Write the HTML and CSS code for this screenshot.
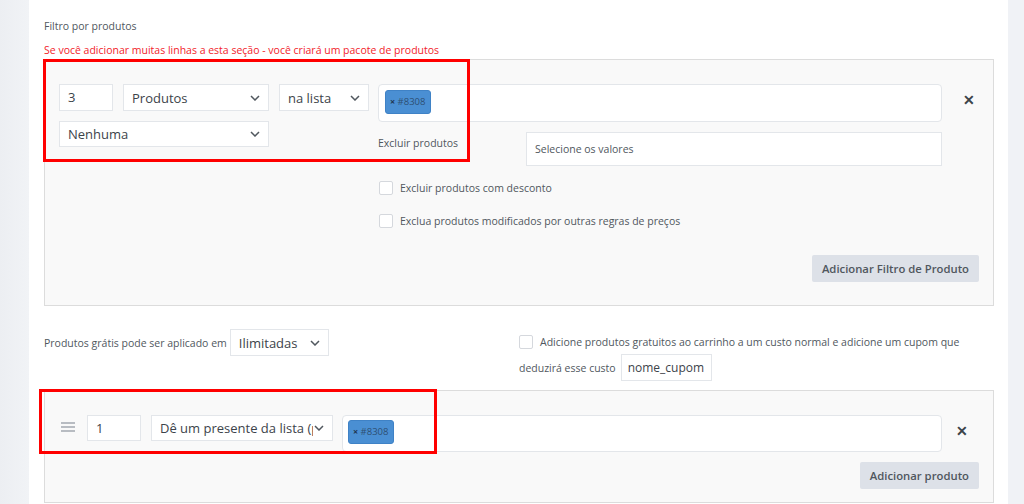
FILE: index.html
```html
<!DOCTYPE html>
<html lang="pt">
<head>
  <meta charset="UTF-8">
  <title>Regra de preço - produtos grátis</title>
  <link rel="stylesheet" href="styles.css">
</head>
<body>
  <div class="page">
    <div class="side side-left"></div>

    <div class="main">
      <div class="caption">Filtro por produtos</div>
      <div class="warning">Se você adicionar muitas linhas a esta seção - você criará um pacote de produtos</div>

      <div class="box box-filter">
        <div class="rule">
          <div class="rule-left">
            <div class="line">
              <div class="field qty">3</div>
              <div class="select sel-type"><span>Produtos</span><svg viewBox="0 0 10 6"><path d="M1 1l4 4 4-4"/></svg></div>
              <div class="select sel-method"><span>na lista</span><svg viewBox="0 0 10 6"><path d="M1 1l4 4 4-4"/></svg></div>
            </div>
            <div class="line">
              <div class="select sel-none"><span>Nenhuma</span><svg viewBox="0 0 10 6"><path d="M1 1l4 4 4-4"/></svg></div>
            </div>
          </div>

          <div class="rule-right">
            <div class="tagbox"><span class="chip"><b>×</b> #8308</span></div>
            <div class="exclude">
              <div class="exclude-label">Excluir produtos</div>
              <div class="field values">Selecione os valores</div>
            </div>
            <label class="check"><span class="box-check"></span>Excluir produtos com desconto</label>
            <label class="check"><span class="box-check"></span>Exclua produtos modificados por outras regras de preços</label>
          </div>

          <div class="remove">&#x2715;</div>
        </div>
        <div class="footer">
          <button class="btn">Adicionar Filtro de Produto</button>
        </div>
      </div>

      <div class="options">
        <div class="applied">
          Produtos grátis pode ser aplicado em
          <div class="select sel-limit"><span>Ilimitadas</span><svg viewBox="0 0 10 6"><path d="M1 1l4 4 4-4"/></svg></div>
        </div>
        <div class="coupon">
          <div class="coupon-line"><span class="box-check"></span>Adicione produtos gratuitos ao carrinho a um custo normal e adicione um cupom que</div>
          <div class="coupon-line">deduzirá esse custo <div class="field coupon-name">nome_cupom</div></div>
        </div>
      </div>

      <div class="box box-gift">
        <div class="gift-row">
          <div class="handle"><i></i><i></i><i></i></div>
          <div class="field qty">1</div>
          <div class="select sel-gift"><span>Dê um presente da lista (produto)</span><svg viewBox="0 0 10 6"><path d="M1 1l4 4 4-4"/></svg></div>
          <div class="tagbox tagbox-gift"><span class="chip"><b>×</b> #8308</span></div>
          <div class="remove">&#x2715;</div>
        </div>
        <div class="footer">
          <button class="btn">Adicionar produto</button>
        </div>
      </div>
    </div>

    <div class="side side-right"></div>

    <div class="mark mark-filter"></div>
    <div class="mark mark-gift"></div>
  </div>
</body>
</html>
```

FILE: styles.css
```css
html, body { margin: 0; padding: 0; }
body {
  font-family: "Open Sans", "Noto Sans", sans-serif;
  font-size: 10.5px;
  color: #50575e;
  background: #fff;
}
.page { position: relative; display: flex; width: 1024px; height: 504px; overflow: hidden; }
.side { flex: none; }
.side-left { width: 29px; background: linear-gradient(to right, #eceef2, #f1f3f6); }
.side-right { width: 16px; background: #f0f2f6; }

.main { flex: 1; padding: 0 14px 0 15px; background: #fff; }

.caption { margin-top: 18px; height: 16px; line-height: 16px; }
.warning { margin-top: 8px; height: 16px; line-height: 16px; color: #f2232a; }

.box {
  background: #f9f9f9;
  border: 1px solid #dcdcdc;
}
.box-filter { margin-top: 1px; padding: 24px 14px 21px 14px; height: 200px; }

.rule { display: flex; }
.rule-left { width: 310px; }
.line { display: flex; gap: 10px; margin-bottom: 10px; }

.field {
  box-sizing: border-box;
  height: 27px;
  line-height: 25px;
  padding: 0 8px;
  background: #fff;
  border: 1px solid #e3e6ea;
  font-size: 13px;
  color: #3c434a;
}
.qty { width: 54px; }

.select {
  box-sizing: border-box;
  display: flex;
  align-items: center;
  height: 27px;
  padding: 0 8px;
  background: #fff;
  border: 1px solid #e3e6ea;
  font-size: 13px;
  color: #3c434a;
}
.select span { flex: 1; white-space: nowrap; overflow: hidden; }
.select svg { flex: none; width: 10px; height: 6px; margin-left: 6px; fill: none; stroke: #50575e; stroke-width: 1.5; }
.sel-type { width: 146px; }
.sel-method { width: 90px; }
.sel-none { width: 210px; height: 26px; }
.sel-limit { width: 99px; margin-left: 3px; }
.sel-gift { width: 182px; }
.sel-gift svg { margin-left: 1px; }

.rule-right { width: 564px; margin-left: 9px; }
.tagbox {
  box-sizing: border-box;
  height: 38px;
  padding: 5px 6px;
  background: #fff;
  border: 1px solid #e3e6ea;
  border-radius: 4px;
}
.chip {
  display: inline-block;
  box-sizing: border-box;
  height: 24px;
  line-height: 22px;
  padding: 0 4px;
  background: #4a8fd3;
  border: 1px solid #3f82c6;
  border-radius: 3px;
  font-size: 9.5px;
  color: #2e4f73;
}
.chip b { font-size: 9px; color: #1f3550; }

.exclude { display: flex; margin-top: 10px; }
.exclude-label { width: 148px; padding-top: 3px; height: 16px; line-height: 16px; }
.values { width: 416px; height: 34px; line-height: 32px; font-size: 10.5px; color: #50575e; }

.check { display: flex; align-items: center; height: 14px; margin-top: 15px; margin-left: 1px; }
.check + .check { margin-top: 19px; }
.box-check {
  flex: none;
  box-sizing: border-box;
  width: 14px;
  height: 14px;
  margin-right: 7px;
  background: #fff;
  border: 1px solid #d5d8dd;
  border-radius: 2px;
}

.remove { flex: 1; text-align: center; font-size: 14px; font-weight: bold; color: #3c434a; padding-top: 6px; padding-left: 16px; }

.footer { display: flex; justify-content: flex-end; }
.box-filter .footer { margin-top: 27px; }
.btn {
  height: 27px;
  padding: 0 10px;
  border: none;
  border-radius: 2px;
  background: #dde1e8;
  color: #50575e;
  font-family: "Open Sans", "Noto Sans", sans-serif;
  font-size: 11.3px;
  font-weight: 600;
}

.options { display: flex; margin-top: 23px; height: 61px; }
.applied { display: flex; align-items: center; height: 27px; width: 475px; }
.coupon { width: 475px; }
.coupon-line { display: flex; align-items: center; height: 20px; margin-top: 3px; }
.coupon-line + .coupon-line { height: 27px; margin-top: 2px; }
.coupon-name { width: 91px; margin-left: 5px; padding: 0 6px; font-size: 12px; }

.box-gift { height: 113px; box-sizing: border-box; padding: 24px 14px 0 16px; }
.gift-row { display: flex; align-items: flex-start; }
.handle { width: 14px; margin: 7px 12px 0 0; }
.handle i { display: block; height: 2px; background: #b8bcc2; margin-bottom: 2px; }
.gift-row .field { height: 26px; line-height: 24px; }
.gift-row .select { height: 26px; margin-left: 10px; }
.tagbox-gift { width: 600px; height: 37px; margin-left: 9px; padding: 4px 5px; }
.gift-row .remove { padding-top: 6px; padding-left: 2px; }
.box-gift .footer { margin-top: 10px; }

.mark { position: absolute; border: 3px solid #f00; box-sizing: border-box; }
.mark-filter { left: 43px; top: 59px; width: 427px; height: 103px; }
.mark-gift { left: 39px; top: 389px; width: 398px; height: 65px; }
```
